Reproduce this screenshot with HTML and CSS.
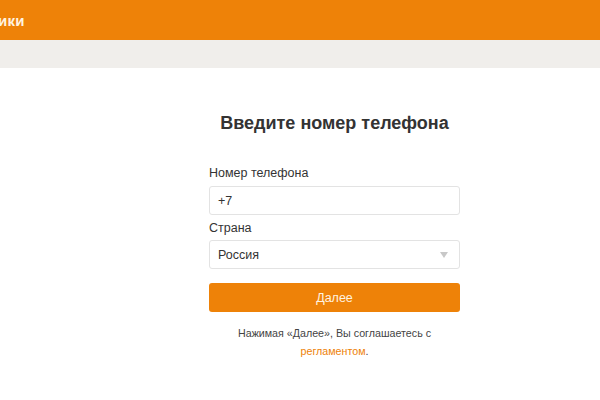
FILE: index.html
```html
<!DOCTYPE html>
<html lang="ru">
<head>
<meta charset="utf-8">
<link rel="stylesheet" href="styles.css">
</head>
<body>
<header class="topbar"><span class="brand">ики</span></header>
<div class="subbar"></div>
<main class="content">
  <section class="form">
    <h1 class="title">Введите номер телефона</h1>
    <label class="label">Номер телефона</label>
    <div class="field">+7</div>
    <label class="label label-country">Страна</label>
    <div class="field select">Россия<span class="arrow"></span></div>
    <button class="btn">Далее</button>
    <p class="note">Нажимая «Далее», Вы соглашаетесь с<br><a class="link">регламентом</a>.</p>
  </section>
</main>
</body>
</html>
```

FILE: styles.css
```css
* { box-sizing: border-box; }
body { margin: 0; font-family: Arial, "Liberation Sans", sans-serif; background: #fff; color: #333; }
.topbar { height: 40px; background: #ee8208; display: flex; align-items: center; }
.brand { color: #fff3e0; font-weight: bold; font-size: 15px; margin-left: -2px; letter-spacing: 0.3px; }
.subbar { height: 28px; background: #f0eeeb; }
.content { display: flex; justify-content: flex-start; padding-left: 209px; }
.form { width: 251px; display: flex; flex-direction: column; }
.title { font-size: 18px; font-weight: bold; color: #333; text-align: center; margin: 45px 0 0; line-height: 20px; }
.label { font-size: 12.5px; color: #333; margin-top: 33px; line-height: 14px; }
.label-country { margin-top: 6px; }
.field { height: 29px; border: 1px solid #e3e3e3; border-radius: 3px; margin-top: 6px; font-size: 12.5px; color: #333; display: flex; align-items: center; padding-left: 8px; position: relative; }
.select { justify-content: space-between; padding-right: 11px; margin-top: 5px; }
.arrow { width: 0; height: 0; border-left: 4px solid transparent; border-right: 4px solid transparent; border-top: 6px solid #c8c8c8; }
.btn { height: 29px; margin-top: 14px; background: #ee8208; border: none; border-radius: 3px; color: #fff3e0; font-size: 12.5px; font-family: inherit; }
.note { font-size: 10.7px; color: #444; text-align: center; line-height: 18px; margin: 12px 0 0; }
.link { color: #ee8208; }
```
